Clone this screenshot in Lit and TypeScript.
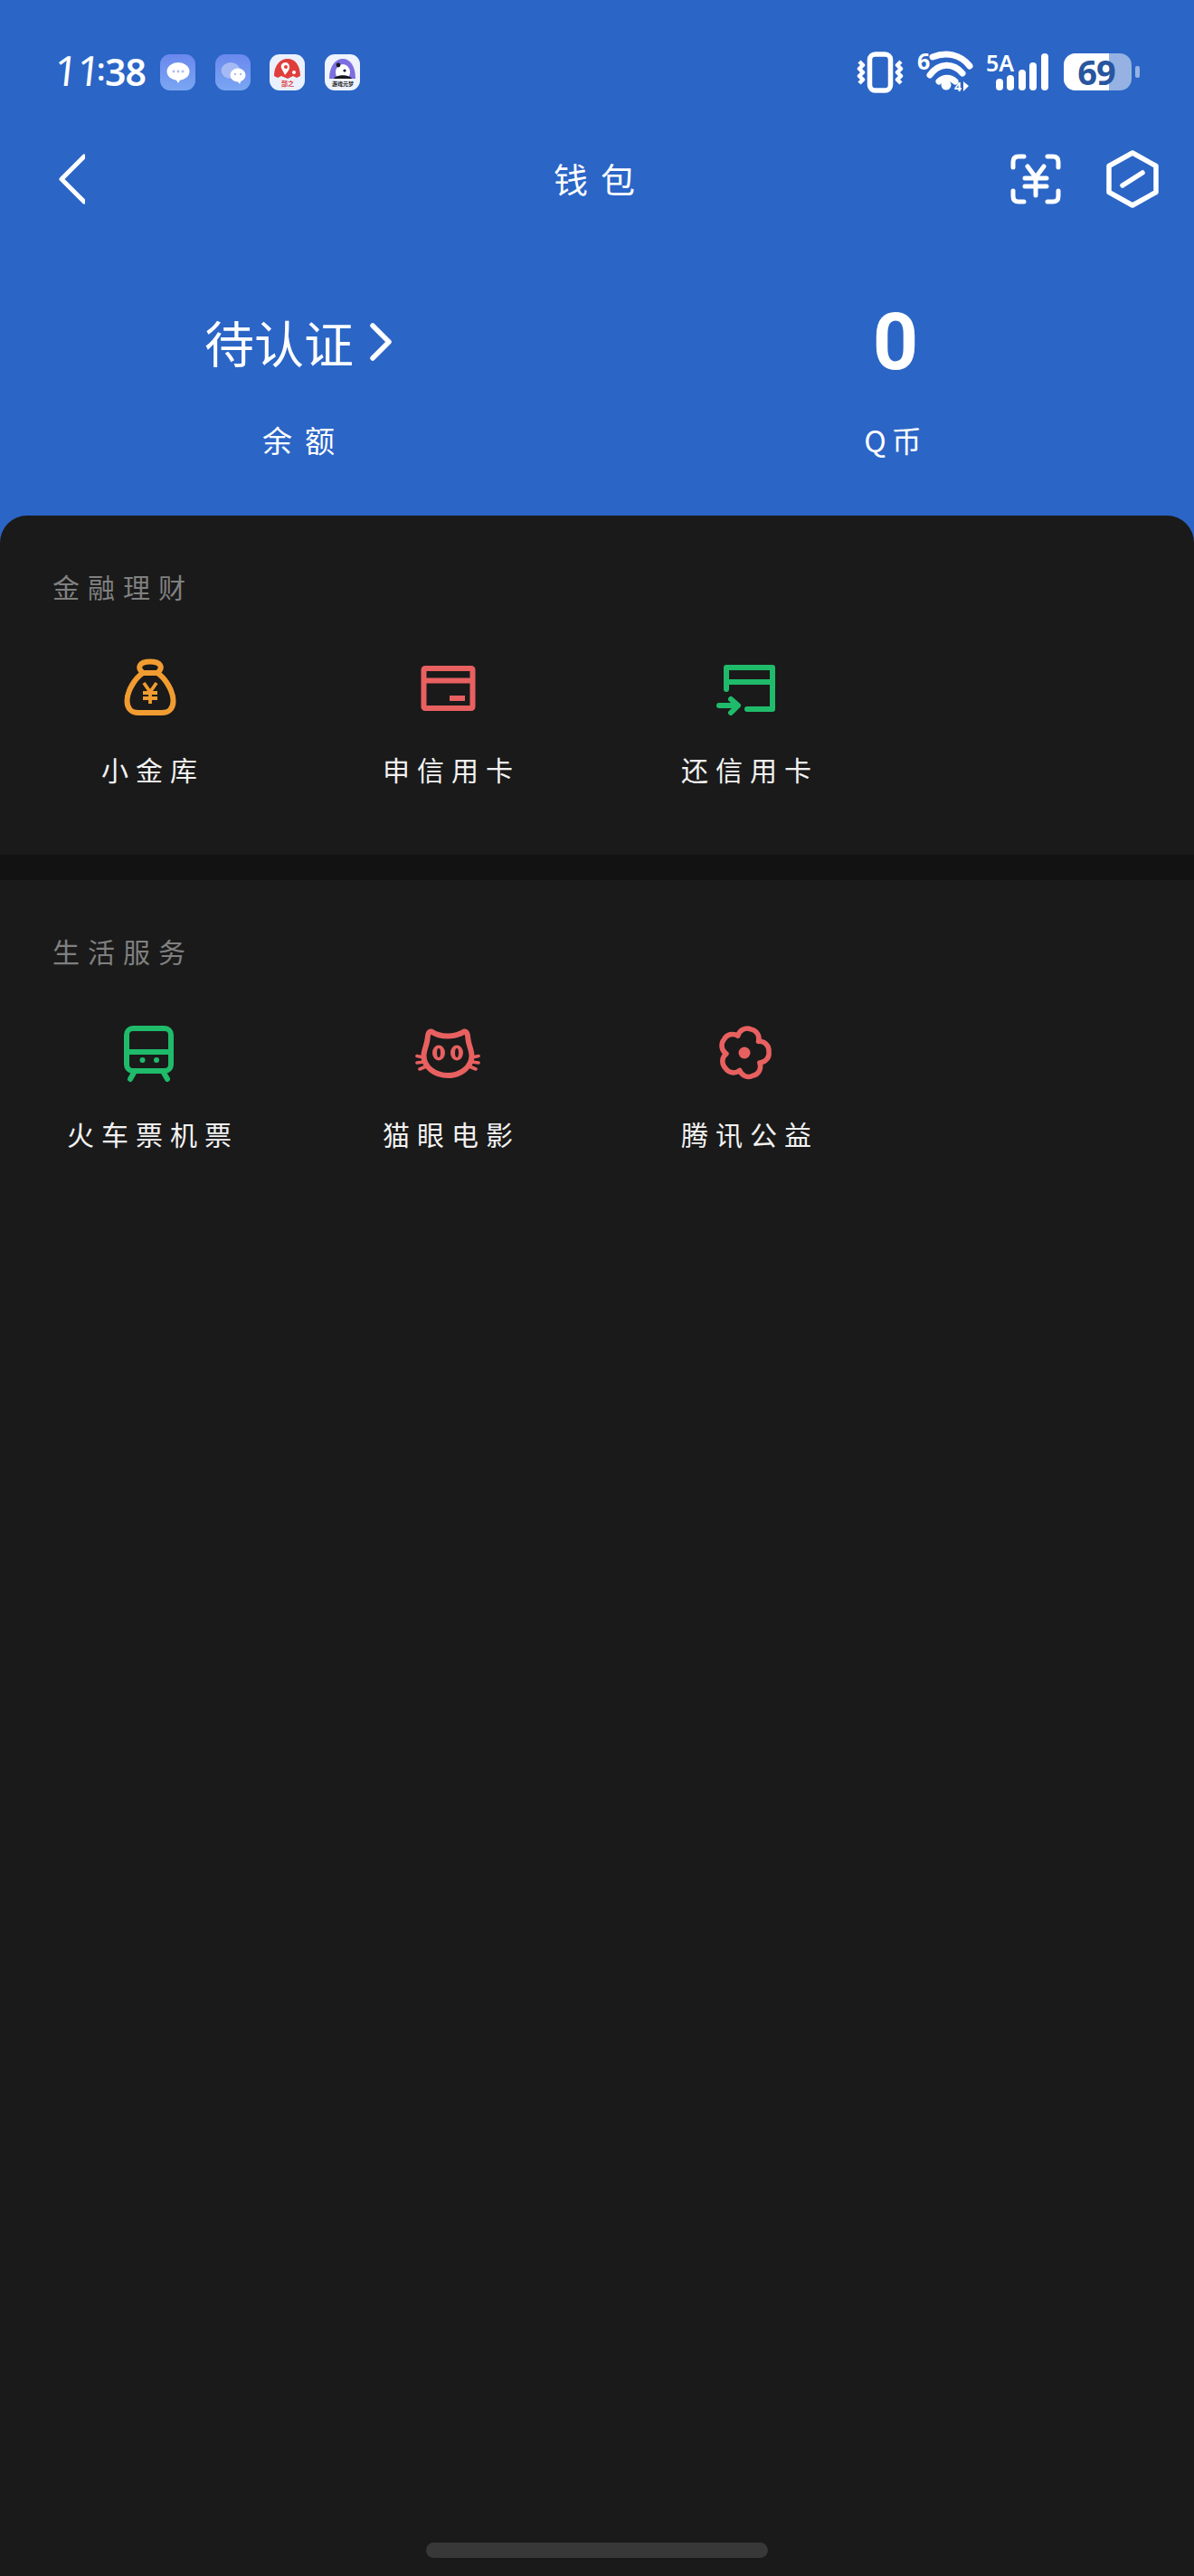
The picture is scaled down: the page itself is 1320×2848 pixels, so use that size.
import { LitElement, html, css, svg } from 'lit';
import { customElement } from 'lit/decorators.js';

const RED = '#e86060';
const GREEN = '#1fbb6b';
const ORANGE = '#f19c31';

// five petals, each made of two arcs with a small dent in the middle
function flowerPath(cx: number, cy: number): string {
  const at = (r: number, deg: number) => {
    const t = (deg * Math.PI) / 180;
    return `${(cx + r * Math.sin(t)).toFixed(1)} ${(cy - r * Math.cos(t)).toFixed(1)}`;
  };
  let d = `M${at(20, 15 - 36)}`;
  for (let k = 0; k < 5; k++) {
    const mid = 15 + k * 72;
    d += `A10.5 10.5 0 0 1 ${at(27, mid)}A10.5 10.5 0 0 1 ${at(20, mid + 36)}`;
  }
  return d + 'Z';
}

const bagIcon = svg`
  <g fill="none" stroke=${ORANGE} stroke-width="6" stroke-linecap="round" stroke-linejoin="round">
    <path d="M29 20C22 14 25 7.5 37 7.5S52 14 45 20Z"/>
    <path d="M29 20C20 26 11.5 40 11.5 51C11.5 60 17 64 24 64H50C57 64 62.5 60 62.5 51C62.5 40 54 26 45 20"/>
    <path d="M30 31L37 41L44 31M29 42H45M29 48H45M37 41V54" stroke-width="3.8" stroke-linecap="butt"/>
  </g>`;

const cardIcon = svg`
  <g fill="none" stroke=${RED} stroke-width="6" stroke-linejoin="round">
    <rect x="9.5" y="15" width="54" height="44" rx="1.5"/>
    <path d="M9.5 28.5H63.5M38 48H55"/>
  </g>`;

const repayIcon = svg`
  <g fill="none" stroke=${GREEN} stroke-width="6" stroke-linecap="round" stroke-linejoin="round">
    <path d="M14 38V14H65V60H37"/>
    <path d="M14 30H65"/>
    <path d="M6 56H26M19 49L27 56L19 64"/>
  </g>`;

const trainIcon = svg`
  <g fill="none" stroke=${GREEN} stroke-width="6" stroke-linecap="round" stroke-linejoin="round">
    <rect x="11" y="10" width="49" height="47" rx="7"/>
    <path d="M11 36H60M19 59L15 66M52 59L56 66"/>
  </g>
  <circle cx="28.5" cy="45" r="3" fill=${GREEN}/>
  <circle cx="44" cy="45" r="3" fill=${GREEN}/>`;

const catIcon = svg`
  <g fill="none" stroke=${RED} stroke-width="6" stroke-linejoin="round">
    <path d="M18 13.5C23 17 30 18.5 36 18.5C42 18.5 49 17 54 13.5C57 13 58 16 58.5 22C59 28 62.5 34 62.5 40C62.5 53 50 62 36 62C22 62 9.5 53 9.5 40C9.5 34 13 28 13.5 22C14 16 15 13 18 13.5Z"/>
  </g>
  <g fill="none" stroke=${RED} stroke-width="3.6" stroke-linecap="round">
    <path d="M9 42L2 40.5M9 47L2 48M12 52L5 55M63 42L70 40.5M63 47L70 48M60 52L67 55"/>
  </g>
  <ellipse cx="26" cy="37" rx="7" ry="8.5" fill=${RED}/>
  <ellipse cx="46" cy="37" rx="7" ry="8.5" fill=${RED}/>
  <ellipse cx="26" cy="37" rx="2" ry="5" fill="#1a1a1a"/>
  <ellipse cx="46" cy="37" rx="2" ry="5" fill="#1a1a1a"/>`;

const flowerIcon = svg`
  <path d=${flowerPath(34, 37)} fill="none" stroke=${RED} stroke-width="5.5" stroke-linejoin="round"/>
  <circle cx="34" cy="37" r="6.5" fill=${RED}/>`;

const sections = [
  {
    title: '金融理财',
    items: [
      { label: '小金库', icon: bagIcon },
      { label: '申信用卡', icon: cardIcon },
      { label: '还信用卡', icon: repayIcon },
    ],
  },
  {
    title: '生活服务',
    items: [
      { label: '火车票机票', icon: trainIcon },
      { label: '猫眼电影', icon: catIcon },
      { label: '腾讯公益', icon: flowerIcon },
    ],
  },
];

@customElement('app-root')
export class AppRoot extends LitElement {
  static styles = css`
    :host {
      display: flex;
      flex-direction: column;
      width: 1320px;
      min-height: 2848px;
      background: #2b65c6;
      color: #fff;
      font-family: 'Noto Sans CJK SC', 'Noto Sans', sans-serif;
    }
    svg {
      display: block;
      flex: none;
    }
    .status {
      display: flex;
      align-items: center;
      height: 45px;
      padding: 57px 60px 0;
    }
    .time {
      width: 98px;
      margin-right: 19px;
      font: 600 41px/45px 'Noto Sans', sans-serif;
      letter-spacing: -1px;
      white-space: nowrap;
    }
    .time .one {
      display: inline-block;
      width: 25px;
      font-size: 46px;
      font-weight: 400;
      transform: skewX(-6deg);
    }
    .time .colon {
      display: inline-block;
      width: 6px;
      font-size: 34px;
      transform: translate(-3px, -6px);
    }
    .apps {
      display: flex;
      gap: 21.5px;
    }
    .app {
      width: 39px;
      height: 40px;
      border-radius: 11px;
      overflow: hidden;
    }
    .sys {
      display: flex;
      align-items: center;
      margin-left: auto;
    }
    .wifi {
      margin-left: 15px;
    }
    .signal {
      margin-left: 14px;
    }
    .battery {
      position: relative;
      width: 75px;
      height: 41px;
      margin-left: 16px;
      border-radius: 13px;
      background: rgba(255, 255, 255, 0.5);
    }
    .battery .fill {
      width: 50px;
      height: 100%;
      border-radius: 13px 0 0 13px;
      background: #fff;
    }
    .battery .level {
      position: absolute;
      inset: 0 auto 0 0;
      width: 72px;
      text-align: center;
      color: #28569f;
      font: 700 38px/41px 'Noto Sans', sans-serif;
      letter-spacing: -1px;
    }
    .nub {
      width: 5px;
      height: 13px;
      margin-left: 4px;
      border-radius: 2px;
      background: rgba(255, 255, 255, 0.5);
    }
    .topbar {
      display: grid;
      grid-template-columns: 1fr auto 1fr;
      align-items: center;
      height: 62px;
      margin-top: 64px;
      padding: 0 39px;
    }
    .back {
      margin-left: 25px;
    }
    .page-title {
      font-size: 38px;
      line-height: 60px;
      padding: 0 0 2px 8px;
      letter-spacing: 14px;
    }
    .actions {
      display: flex;
      align-items: center;
      justify-content: flex-end;
      gap: 50px;
    }
    .stats {
      display: grid;
      grid-template-columns: 660px 660px;
      margin-top: 115px;
      padding-bottom: 64px;
    }
    .stat {
      display: flex;
      flex-direction: column;
      align-items: center;
    }
    .stat-value {
      display: flex;
      align-items: center;
      gap: 17px;
      height: 65px;
      padding-top: 2px;
      font-size: 55px;
      line-height: 65px;
    }
    .zero {
      font: 700 88px/65px Roboto, sans-serif;
    }
    .stat-label {
      margin-top: 56px;
      font-size: 33px;
      line-height: 40px;
      letter-spacing: 14px;
      padding-left: 14px;
    }
    .stat-label.tight {
      letter-spacing: 6px;
      padding-left: 0;
    }
    .sheet {
      flex: 1;
      display: flex;
      flex-direction: column;
      background: #1a1a1a;
      border-radius: 30px 30px 0 0;
      overflow: hidden;
    }
    .section {
      height: 317px;
      padding-top: 58px;
    }
    .divider {
      height: 28px;
      background: #121212;
    }
    .section-title {
      padding-left: 58px;
      color: #808080;
      font-size: 30px;
      line-height: 40px;
      letter-spacing: 9px;
    }
    .grid {
      display: grid;
      grid-template-columns: repeat(4, 330px);
      margin-top: 56px;
    }
    .tile {
      display: flex;
      flex-direction: column;
      align-items: center;
    }
    .tile-label {
      margin-top: 34px;
      padding-left: 8px;
      color: #f2f2f2;
      font-size: 30px;
      line-height: 40px;
      letter-spacing: 8px;
      white-space: nowrap;
    }
    .handle {
      width: 378px;
      height: 17px;
      margin: auto auto 20px;
      border-radius: 9px;
      background: #383838;
    }
  `;

  private renderApps() {
    return html`
      <div class="apps">
        <svg class="app" viewBox="0 0 39 40">
          <defs>
            <linearGradient id="a1" x1="0" y1="0" x2="0" y2="1">
              <stop offset="0" stop-color="#6a88ee" /><stop offset="1" stop-color="#7aa6f2" />
            </linearGradient>
          </defs>
          <rect width="39" height="40" fill="url(#a1)" />
          <ellipse cx="20" cy="19" rx="12.5" ry="10" fill="#fff" />
          <path d="M17 27L20 32L23 27Z" fill="#fff" />
          <circle cx="15" cy="19" r="1.4" fill="#a9bdf3" />
          <circle cx="20" cy="19" r="1.4" fill="#a9bdf3" />
          <circle cx="25" cy="19" r="1.4" fill="#a9bdf3" />
        </svg>
        <svg class="app" viewBox="0 0 39 40">
          <rect width="39" height="40" fill="url(#a1)" />
          <ellipse cx="17" cy="18" rx="10.5" ry="9" fill="#a5baf4" />
          <ellipse cx="25" cy="23" rx="8.5" ry="7.5" fill="#fff" />
          <path d="M24 29L27 33L29 28Z" fill="#fff" />
          <circle cx="22" cy="22" r="1" fill="#8ea8ef" />
          <circle cx="28" cy="22" r="1" fill="#8ea8ef" />
        </svg>
        <svg class="app" viewBox="0 0 39 40">
          <rect width="39" height="40" fill="#eaf1fd" />
          <path d="M5 24C5 12 12 5 20 5S34 12 34 24L30 26L26 24L20 27L13 24L9 26Z" fill="#e03e3c" />
          <path d="M18 9C14 9 12 12 13 15C14 18 16 20 17 23C19 20 22 18 22 14C22 11 20 9 18 9Z" fill="#fff" />
          <circle cx="18" cy="14" r="2" fill="#e03e3c" />
          <circle cx="27" cy="20" r="2" fill="#fff" />
          <text x="20" y="35" text-anchor="middle" font-size="7" font-weight="700" fill="#e03e3c">部之</text>
        </svg>
        <svg class="app" viewBox="0 0 39 40">
          <rect width="39" height="40" fill="#eef3fd" />
          <path d="M5 27C5 13 12 5 20 5S34 13 34 27Z" fill="#7d6fe0" />
          <ellipse cx="20" cy="20" rx="8" ry="9" fill="#fff" />
          <path d="M10 27C13 22 27 22 30 27Z" fill="#16161e" />
          <circle cx="15" cy="12" r="2.4" fill="#16161e" />
          <circle cx="22" cy="18" r="1.6" fill="#16161e" />
          <text x="20" y="35" text-anchor="middle" font-size="6" font-weight="700" fill="#222">游戏元梦</text>
        </svg>
      </div>
    `;
  }

  private renderSys() {
    return html`
      <div class="sys">
        <svg width="52" height="46" viewBox="0 0 52 46">
          <rect x="14.5" y="3" width="23" height="40" rx="6" fill="none" stroke="#fff" stroke-width="5.5" />
          <g fill="none" stroke="#fff" stroke-width="4.5" stroke-linejoin="round">
            <path d="M3 11L7 15L3 19L7 23L3 27L7 31L3 35" />
            <path d="M49 11L45 15L49 19L45 23L49 27L45 31L49 35" />
          </g>
        </svg>
        <svg class="wifi" width="62" height="70" viewBox="0 -12 62 70">
          <text x="0" y="20" font-family="Noto Sans" font-size="25" font-weight="700" fill="#fff">6</text>
          <g fill="none" stroke="#fff" stroke-width="7" stroke-linecap="round">
            <path d="M17 6C32 0 48 3 58 16" />
            <path d="M14 26C24 12 40 12 50 24" />
            <path d="M24 33C29 28 37 28 42 33" />
          </g>
          <circle cx="32" cy="37" r="5.5" fill="#fff" />
          <text x="41" y="44" font-family="Noto Sans" font-size="14" font-weight="700" fill="#fff">4</text>
          <path d="M51 33L57 38L51 44Z" fill="#fff" />
        </svg>
        <svg class="signal" width="70" height="70" viewBox="0 -12 70 70">
          <text x="0" y="22" font-family="Noto Sans" font-size="25" font-weight="600" fill="#fff">5A</text>
          <g fill="#fff">
            <rect x="11" y="30" width="8" height="13" rx="4" />
            <rect x="23" y="26" width="8" height="17" rx="4" />
            <rect x="36" y="20" width="8" height="23" rx="4" />
            <rect x="48" y="12" width="8" height="31" rx="4" />
            <rect x="61" y="2" width="8" height="41" rx="4" />
          </g>
        </svg>
        <div class="battery">
          <div class="fill"></div>
          <div class="level">69</div>
        </div>
        <div class="nub"></div>
      </div>
    `;
  }

  render() {
    return html`
      <div class="status">
        <div class="time"><span class="one">1</span><span class="one">1</span><span class="colon">:</span>38</div>
        ${this.renderApps()} ${this.renderSys()}
      </div>

      <div class="topbar">
        <svg class="back" width="30" height="56" viewBox="0 0 30 56" fill="none" stroke="#fff" stroke-width="5" stroke-linecap="round" stroke-linejoin="round">
          <path d="M29 3L4 28L29 53" />
        </svg>
        <div class="page-title">钱包</div>
        <div class="actions">
          <svg width="56" height="56" viewBox="0 0 56 56" fill="none" stroke="#fff" stroke-width="5" stroke-linecap="round" stroke-linejoin="round">
            <path d="M15 3H9C5 3 3 5 3 9V15M41 3H47C51 3 53 5 53 9V15M3 41V47C3 51 5 53 9 53H15M53 41V47C53 51 51 53 47 53H41" />
            <path d="M19 14L28 26L37 14M16 27H40M16 36H40M28 26V46" />
          </svg>
          <svg width="58" height="64" viewBox="0 0 58 64" fill="none" stroke="#fff" stroke-width="5.5" stroke-linecap="round" stroke-linejoin="round">
            <path d="M29 3L55 17.5V46.5L29 61L3 46.5V17.5Z" />
            <path d="M18 39L40 25" />
          </svg>
        </div>
      </div>

      <div class="stats">
        <div class="stat">
          <div class="stat-value">
            待认证
            <svg width="26" height="42" viewBox="0 0 26 42" fill="none" stroke="#fff" stroke-width="5.5" stroke-linecap="round" stroke-linejoin="round">
              <path d="M4 3L22 21L4 39" />
            </svg>
          </div>
          <div class="stat-label">余额</div>
        </div>
        <div class="stat">
          <div class="stat-value"><span class="zero">0</span></div>
          <div class="stat-label tight">Q币</div>
        </div>
      </div>

      <div class="sheet">
        ${sections.map(
          (section, i) => html`
            ${i > 0 ? html`<div class="divider"></div>` : ''}
            <div class="section">
              <div class="section-title">${section.title}</div>
              <div class="grid">
                ${section.items.map(
                  item => html`
                    <div class="tile">
                      <svg width="72" height="72" viewBox="0 0 72 72">${item.icon}</svg>
                      <div class="tile-label">${item.label}</div>
                    </div>
                  `,
                )}
              </div>
            </div>
          `,
        )}
        <div class="handle"></div>
      </div>
    `;
  }
}
